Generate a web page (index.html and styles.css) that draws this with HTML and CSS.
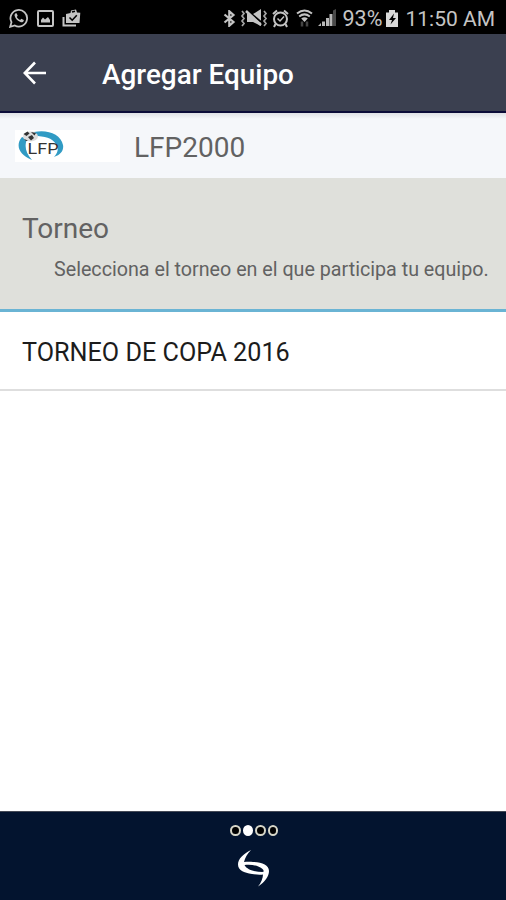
FILE: index.html
```
<!DOCTYPE html>
<html lang="es">
<head>
    <meta charset="UTF-8">
    <meta name="viewport" content="width=device-width, initial-scale=1.0">
    <title>Agregar Equipo</title>
    <link rel="stylesheet" href="styles.css">
</head>
<body>
    <div class="screen">
        <div class="status-bar">
            <div class="notifications">
                <!-- whatsapp -->
                <svg width="20" height="20" viewBox="0 0 20 20">
                    <path d="M1.2 18.8l1.3-4.6a8.3 8.3 0 1 1 3.3 3.3z" fill="none" stroke="#c4c4c4" stroke-width="1.8"/>
                    <path d="M6.7 5.2c-1 .5-1.4 1.6-1 2.9.8 2.9 3 5 5.8 6 1.4.5 2.7 0 3.2-1.2l.1-.9-2.500-1.300-1.200 1.300c-1.500-.6-2.600-1.700-3.300-3.100l.9-1.200-1.100-2.500z" fill="#c4c4c4"/>
                </svg>
                <!-- galería -->
                <svg width="17" height="17" viewBox="0 0 17 17">
                    <rect x="1" y="1" width="15" height="15" rx="1" fill="none" stroke="#c4c4c4" stroke-width="2"/>
                    <path d="M4 12.500V10l2-2.500 2 2 3-2.500 2 3v2.500z" fill="#c4c4c4"/>
                </svg>
                <!-- play store -->
                <svg width="19" height="18" viewBox="0 0 19 18">
                    <path d="M1.500 8v8.500H14" fill="none" stroke="#c4c4c4" stroke-width="2"/>
                    <path d="M4 5l4.500-1 .5-2.500L14 .5l1 3 3.300.3-.8 10.200H4z" fill="#c4c4c4"/>
                    <path d="M7.500 8.500l2.700 2.700 4.600-5M10 3l3-.8" fill="none" stroke="#000" stroke-width="1.600"/>
                </svg>
            </div>
            <div class="system">
                <!-- bluetooth -->
                <svg class="bluetooth" width="13" height="17" viewBox="0 0 13 17">
                    <path d="M1.500 4.500l9 7.500-4.200 3.700V1.300L10.500 5l-9 7.500" fill="none" stroke="#c4c4c4" stroke-width="2.200"/>
                </svg>
                <!-- vibración -->
                <svg class="vibrate" width="28" height="18" viewBox="0 0 28 18">
                    <path d="M2 2l2 2.500L2 7l2 2.500L2 12l2 2.500L2 17M24 2l2 2.500L24 7l2 2.500L24 12l2 2.500L24 17" fill="none" stroke="#a5a5a5" stroke-width="1.700"/>
                    <path d="M7 5h6l8-5v17l-8-4H7z" fill="#c4c4c4"/>
                    <path d="M8 2l13 11" stroke="#000" stroke-width="2"/>
                    <path d="M6 2l15 14" stroke="#c4c4c4" stroke-width="2.500"/>
                </svg>
                <!-- alarma -->
                <svg class="alarm" width="17" height="19" viewBox="0 0 17 19">
                    <circle cx="8.500" cy="10" r="6.500" fill="none" stroke="#c4c4c4" stroke-width="2"/>
                    <path d="M1 5l4-3.500M16 5l-4-3.500M3.500 15L2 18M13.500 15l1.500 3" stroke="#c4c4c4" stroke-width="2"/>
                    <path d="M5.500 9.500L8 12l4-4.500" fill="none" stroke="#c4c4c4" stroke-width="1.500"/>
                </svg>
                <!-- wifi -->
                <svg class="wifi" width="17" height="19" viewBox="0 0 17 19">
                    <path d="M1 4.500q7.500-6 15 0M3.200 7.500q5.300-4.200 10.600 0" fill="none" stroke="#c4c4c4" stroke-width="2"/>
                    <path d="M5.200 9.500q3.300-2.500 6.600 0l-3.300 3.500z" fill="#c4c4c4"/>
                    <path d="M6 12.500v5M11 12.500v5" stroke="#444" stroke-width="2.500"/>
                </svg>
                <!-- señal -->
                <svg class="signal" width="19" height="18" viewBox="0 0 19 18">
                    <path d="M0 17l3-3v3zM4 12.500h3V17H4zM8 9h3v8H8zM11.500 5h3v12h-3z" fill="#b8b8b8"/>
                    <path d="M15 1.500L18 0v17h-3z" fill="#4a4a4a"/>
                </svg>
                <span class="percent">93%</span>
                <!-- batería -->
                <svg class="battery" width="12" height="17" viewBox="0 0 12 17">
                    <path d="M0 2.500h3V0h6v2.500h3V17H0z" fill="#d8d8d8"/>
                    <path d="M8 3.500L3 10h3l-1.500 4.500L10 8H7z" fill="#000"/>
                </svg>
                <span class="clock">11:50 AM</span>
            </div>
        </div>

        <div class="toolbar">
            <svg class="back" width="24" height="24" viewBox="0 0 24 24">
                <path d="M23 12H2M12 1.500L1.800 12 12 22.500" fill="none" stroke="#fff" stroke-width="2.600"/>
            </svg>
            <h1>Agregar Equipo</h1>
        </div>

        <div class="team">
            <div class="team-logo">
                <svg width="50" height="31" viewBox="0 0 50 31">
                    <path d="M5 7C-2 15 2 25 15 30C9 23 7 17 10 9z" fill="#319bc4"/>
                    <path d="M17 2C30-1 44 4 46 15C47 20 44 25 37 27C41 23 42 18 39 14C35 8 28 6 17 6z" fill="#319bc4"/>
                    <ellipse cx="13.500" cy="6.500" rx="7.500" ry="5" fill="#ddd"/>
                    <path d="M6.500 4l4-2.500 2 2-3 2.500zM14 2l5 1-1.500 2.500zM11 7l4-2 2 3-3 2.500zM7 9l2 2 2-.5z" fill="#333"/>
                    <text x="10.500" y="23.500" class="logo-text" textLength="31" lengthAdjust="spacingAndGlyphs">LFP</text>
                </svg>
            </div>
            <span class="team-name">LFP2000</span>
        </div>

        <div class="section">
            <h2>Torneo</h2>
            <p>Selecciona el torneo en el que participa tu equipo.</p>
        </div>

        <ul class="list">
            <li>TORNEO DE COPA 2016</li>
        </ul>

        <div class="footer">
            <div class="dots">
                <span class="dot"></span>
                <span class="dot active"></span>
                <span class="dot"></span>
                <span class="dot"></span>
            </div>
            <svg class="brand" width="32" height="37" viewBox="0 0 32 37">
                <path fill-rule="evenodd" d="M13 0C5 4 0 9 0 14.500C0 20 6 23 14 24C19 25 23 25 25 24.500C25 28 23 33 20 36.500C27 32 31 26 31 21C31 15 24 12.500 15 12C11 11.500 8 12 6 12C7 8 9 4 13 0zM6.500 15C13 14 21 15.500 24.500 19C26 20.500 26 22 24.500 22C17 22 9 20 6.500 15z" fill="#fff"/>
            </svg>
        </div>
    </div>
</body>
</html>
```
FILE: styles.css
```
*{
    box-sizing: border-box;
}
body{
    margin: 0;
    font-family: Roboto, sans-serif;
}
svg{
    display: block;
    flex: none;
}
h1, h2, p, ul{
    margin: 0;
    padding: 0;
}
.screen{
    display: flex;
    flex-direction: column;
    width: 506px;
    height: 900px;
    background-color: #fff;
    overflow: hidden;
}
/* barra de estado */
.status-bar{
    display: flex;
    justify-content: space-between;
    align-items: center;
    height: 34px;
    padding: 2px 11px 0 9px;
    background-color: #000;
    color: #c4c4c4;
    font-size: 21.5px;
    line-height: 34px;
    white-space: nowrap;
}
.notifications, .system{
    display: flex;
    align-items: center;
}
.notifications{
    gap: 8px;
}
.vibrate{
    margin-left: 4px;
}
.alarm{
    margin-left: 4px;
}
.wifi{
    margin-left: 7px;
}
.signal{
    margin-left: 5px;
}
.percent{
    margin-left: 6px;
    padding-top: 1px;
}
.battery{
    margin-left: 4px;
}
.clock{
    margin-left: 7px;
    padding-top: 1px;
    font-size: 21px;
}
/* cabecera */
.toolbar{
    display: flex;
    align-items: center;
    height: 79px;
    padding-left: 23px;
    background-color: #3b4050;
    border-bottom: 2px solid #0c0c38;
    color: #fff;
}
.toolbar h1{
    margin-left: 55px;
    font-size: 27.9px;
    font-weight: 500;
    line-height: 32px;
    padding-top: 4px;
}
/* equipo */
.team{
    display: flex;
    align-items: center;
    height: 65px;
    padding-left: 15px;
    background: linear-gradient(#dfe1e6, #f5f7fa 6px);
    color: #626262;
}
.team-logo{
    width: 105px;
    height: 32px;
    padding-left: 2px;
    background-color: #fff;
}
.logo-text{
    font-family: Roboto, sans-serif;
    font-size: 15px;
    fill: #333;
}
.team-name{
    margin-left: 14px;
    padding-top: 3px;
    font-size: 28px;
}
.section{
    height: 134px;
    padding: 34px 0 0 22px;
    background-color: #dfe0db;
    border-bottom: 3px solid #6ab4d4;
    color: #626262;
}
.section h2{
    font-size: 28px;
    font-weight: 400;
    line-height: 34px;
}
.section p{
    padding: 11px 0 0 32px;
    font-size: 19.7px;
    line-height: 25px;
    white-space: nowrap;
}
.list{
    flex: 1;
    list-style: none;
}
.list li{
    height: 79px;
    padding-left: 22px;
    border-bottom: 2px solid #dedede;
    color: #1c1c1c;
    font-size: 25.2px;
    line-height: 82px;
}
/* pie */
.footer{
    display: flex;
    flex-direction: column;
    align-items: center;
    height: 89px;
    padding: 13px 0 0 2px;
    background-color: #03142f;
    border-top: 1px solid #454a56;
}
.dots{
    display: flex;
    gap: 2px;
}
.dot{
    width: 10.5px;
    height: 11px;
    border: 2px solid #d6d6c8;
    border-radius: 50%;
    background-color: #000;
}
.dot.active{
    border-color: #fff;
    background-color: #fff;
}
.brand{
    margin-top: 14px;
}
```
